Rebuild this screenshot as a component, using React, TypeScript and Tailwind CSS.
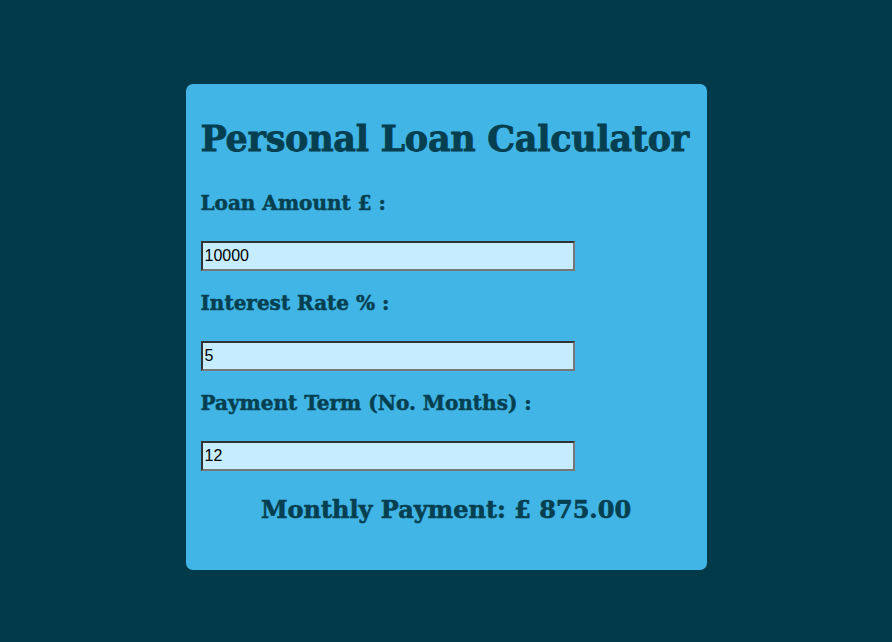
import { useState } from 'react';

export default function App() {
  const [amount, setAmount] = useState('10000');
  const [rate, setRate] = useState('5');
  const [term, setTerm] = useState('12');

  const p = parseFloat(amount) || 0;
  const r = parseFloat(rate) || 0;
  const n = parseFloat(term) || 0;
  // simple interest spread over the term
  const monthly = n > 0 ? (p + p * (r / 100)) / n : 0;

  const fields = [
    { label: 'Loan Amount £ :', value: amount, set: setAmount },
    { label: 'Interest Rate % :', value: rate, set: setRate },
    { label: 'Payment Term (No. Months) :', value: term, set: setTerm },
  ];

  return (
    <div className="min-h-[642px] bg-[#033a4a] pt-[84px] font-['DejaVu_Serif',serif]">
      <div className="mx-auto h-[486px] w-[521px] rounded-[7px] bg-[#41b5e6] px-[15px] pt-[35px] text-[#053f50]">
        <h1 className="text-[35px] leading-[40px] font-bold tracking-[-0.3px] whitespace-nowrap [-webkit-text-stroke:0.8px_#053f50]">
          Personal Loan Calculator
        </h1>
        <div className="mt-[32px] flex flex-col gap-[20px]">
          {fields.map((f) => (
            <div key={f.label} className="flex flex-col gap-[26px]">
              <label className="text-[20px] leading-[24px] font-bold [-webkit-text-stroke:0.5px_#053f50]">
                {f.label}
              </label>
              <input
                type="text"
                value={f.value}
                onChange={(e) => f.set(e.target.value)}
                className="h-[30px] w-[374px] border-2 border-t-[#333] border-l-[#333] border-b-[#777] border-r-[#777] bg-[#c6ecff] px-[2px] font-['Liberation_Sans',Arial,sans-serif] text-[16px] text-black outline-none"
              />
            </div>
          ))}
        </div>
        <h2 className="mt-[23px] text-center text-[24px] leading-[32px] font-bold [-webkit-text-stroke:0.6px_#053f50]">
          Monthly Payment: £ {monthly.toFixed(2)}
        </h2>
      </div>
    </div>
  );
}
